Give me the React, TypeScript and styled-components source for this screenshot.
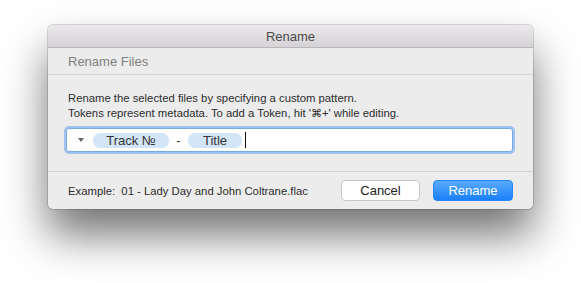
import React from 'react'
import styled, { createGlobalStyle } from 'styled-components'

const GlobalStyle = createGlobalStyle`
  html, body {
    margin: 0;
    padding: 0;
    background: #ffffff;
  }
  body {
    font-family: "Liberation Sans", Arial, sans-serif;
  }
`

const Page = styled.div`
  width: 581px;
  height: 283px;
  padding: 25px 0 0 48px;
  box-sizing: border-box;
  overflow: hidden;
`

const Window = styled.div`
  width: 485px;
  height: 184px;
  background: #ececec;
  border-radius: 5px;
  overflow: hidden;
  box-shadow: 0 26px 44px rgba(0, 0, 0, 0.55), 0 0 0 1px rgba(0, 0, 0, 0.14);
  display: flex;
  flex-direction: column;
`

const TitleBar = styled.div`
  height: 22px;
  flex-shrink: 0;
  display: flex;
  align-items: center;
  justify-content: center;
  background: linear-gradient(#ebe9eb, #d5d3d5);
  border-bottom: 1px solid #b9b7b9;
  font-size: 13px;
  color: #4a4a4a;
`

const Header = styled.div`
  height: 26px;
  flex-shrink: 0;
  display: flex;
  align-items: center;
  padding-left: 20px;
  border-bottom: 1px solid #d4d4d4;
  font-size: 13px;
  color: #7f7f7f;
`

const Content = styled.div`
  padding: 16px 20px 19px 18px;
  border-bottom: 1px solid #d4d4d4;
  display: flex;
  flex-direction: column;
`

const Description = styled.p`
  margin: 0 0 0 2px;
  font-size: 11.3px;
  line-height: 15px;
  color: #2c2c2c;
`

const Field = styled.div`
  margin-top: 7px;
  height: 24px;
  box-sizing: border-box;
  background: #ffffff;
  border: 1px solid #7aaae4;
  border-radius: 3px;
  box-shadow: 0 0 0 2px #9ec3ee;
  display: flex;
  align-items: center;
  padding-left: 11px;
`

const Triangle = styled.span`
  width: 0;
  height: 0;
  border-left: 3.5px solid transparent;
  border-right: 3.5px solid transparent;
  border-top: 4px solid #666666;
  margin-right: 9px;
`

const Token = styled.span<{ width: number }>`
  width: ${({ width }) => width}px;
  height: 15px;
  border-radius: 7px;
  background: #d3e5f8;
  display: flex;
  align-items: center;
  justify-content: center;
  font-size: 13px;
  color: #333333;
`

const Separator = styled.span`
  width: 19px;
  text-align: center;
  font-size: 13px;
  color: #333333;
`

const Caret = styled.span`
  width: 1px;
  height: 16px;
  background: #111111;
  margin-left: 3px;
`

const Footer = styled.div`
  flex: 1;
  display: flex;
  align-items: center;
  padding: 0 20px;
`

const Example = styled.span`
  flex: 1;
  font-size: 11.3px;
  color: #2c2c2c;
`

const Button = styled.button<{ primary?: boolean }>`
  width: ${({ primary }) => (primary ? 80 : 79)}px;
  height: 21px;
  margin-left: ${({ primary }) => (primary ? 13 : 0)}px;
  border-radius: 4px;
  font-family: "Liberation Sans", Arial, sans-serif;
  font-size: 13px;
  padding: 0;
  border: 1px solid ${({ primary }) => (primary ? '#2a86f4' : '#c6c6c6')};
  background: ${({ primary }) =>
    primary ? 'linear-gradient(#5aaafc, #1a80fa)' : '#ffffff'};
  color: ${({ primary }) => (primary ? '#ffffff' : '#222222')};
`

const App = () => {
  return (
    <Page>
      <GlobalStyle />
      <Window>
        <TitleBar>Rename</TitleBar>
        <Header>Rename Files</Header>
        <Content>
          <Description>
            Rename the selected files by specifying a custom pattern.
            <br />
            Tokens represent metadata. To add a Token, hit '⌘+' while editing.
          </Description>
          <Field>
            <Triangle />
            <Token width={76}>Track №</Token>
            <Separator>-</Separator>
            <Token width={54}>Title</Token>
            <Caret />
          </Field>
        </Content>
        <Footer>
          <Example>Example:&nbsp; 01 - Lady Day and John Coltrane.flac</Example>
          <Button>Cancel</Button>
          <Button primary>Rename</Button>
        </Footer>
      </Window>
    </Page>
  )
}

export default App
